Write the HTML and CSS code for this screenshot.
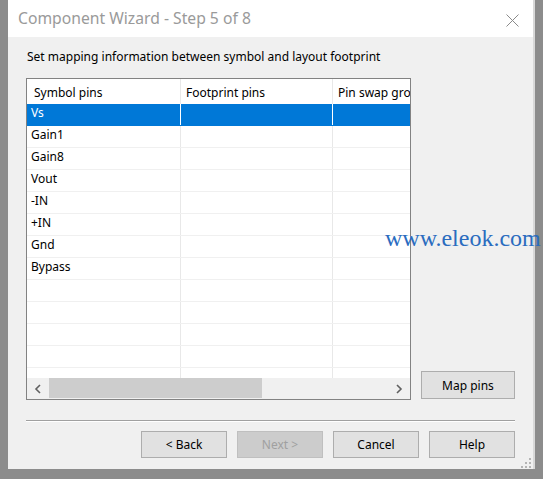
FILE: index.html
```html
<!DOCTYPE html>
<html>
<head>
<meta charset="utf-8">
<link rel="stylesheet" href="styles.css">
</head>
<body>
<div class="dialog">
  <div class="titlebar">
    <span class="title">Component Wizard - Step 5 of 8</span>
    <svg class="close" width="13" height="13" viewBox="0 0 13 13"><path d="M0.5 0.5L12.5 12.5M12.5 0.5L0.5 12.5" stroke="#8a8a8a" stroke-width="1" fill="none"/></svg>
  </div>
  <div class="content">
    <p class="label">Set mapping information between symbol and layout footprint</p>
    <div class="main">
      <div class="grid">
        <div class="grid-head">
          <div class="hc c1">Symbol pins</div>
          <div class="hc c2">Footprint pins</div>
          <div class="hc c3">Pin swap group</div>
        </div>
        <div class="grid-body">
          <div class="row sel"><div class="cell c1">Vs</div><div class="cell c2"></div><div class="cell c3"></div></div>
          <div class="row"><div class="cell c1">Gain1</div><div class="cell c2"></div><div class="cell c3"></div></div>
          <div class="row"><div class="cell c1">Gain8</div><div class="cell c2"></div><div class="cell c3"></div></div>
          <div class="row"><div class="cell c1">Vout</div><div class="cell c2"></div><div class="cell c3"></div></div>
          <div class="row"><div class="cell c1">-IN</div><div class="cell c2"></div><div class="cell c3"></div></div>
          <div class="row"><div class="cell c1">+IN</div><div class="cell c2"></div><div class="cell c3"></div></div>
          <div class="row"><div class="cell c1">Gnd</div><div class="cell c2"></div><div class="cell c3"></div></div>
          <div class="row"><div class="cell c1">Bypass</div><div class="cell c2"></div><div class="cell c3"></div></div>
          <div class="row"><div class="cell c1"></div><div class="cell c2"></div><div class="cell c3"></div></div>
          <div class="row"><div class="cell c1"></div><div class="cell c2"></div><div class="cell c3"></div></div>
          <div class="row"><div class="cell c1"></div><div class="cell c2"></div><div class="cell c3"></div></div>
          <div class="row"><div class="cell c1"></div><div class="cell c2"></div><div class="cell c3"></div></div>
          <div class="row"><div class="cell c1"></div><div class="cell c2"></div><div class="cell c3"></div></div>
        </div>
        <div class="hscroll">
          <div class="arrow"><svg width="8" height="10" viewBox="0 0 8 10"><path d="M6 1L2 5L6 9" stroke="#606060" stroke-width="1.6" fill="none"/></svg></div>
          <div class="track"><div class="thumb"></div></div>
          <div class="arrow"><svg width="8" height="10" viewBox="0 0 8 10"><path d="M2 1L6 5L2 9" stroke="#606060" stroke-width="1.6" fill="none"/></svg></div>
        </div>
      </div>
      <div class="side">
        <button class="btn map">Map pins</button>
      </div>
    </div>
    <div class="sep"></div>
    <div class="buttons">
      <button class="btn">&lt; Back</button>
      <button class="btn disabled">Next &gt;</button>
      <button class="btn">Cancel</button>
      <button class="btn">Help</button>
    </div>
  </div>
  <svg class="grip" width="12" height="12" viewBox="0 0 12 12">
    <rect x="9" y="1" width="2" height="2" fill="#b4b4b4"/>
    <rect x="5" y="5" width="2" height="2" fill="#b4b4b4"/>
    <rect x="9" y="5" width="2" height="2" fill="#b4b4b4"/>
    <rect x="1" y="9" width="2" height="2" fill="#b4b4b4"/>
    <rect x="5" y="9" width="2" height="2" fill="#b4b4b4"/>
    <rect x="9" y="9" width="2" height="2" fill="#b4b4b4"/>
  </svg>
</div>
<div class="watermark">www.eleok.com</div>
</body>
</html>
```
FILE: styles.css
```css
html, body {
  margin: 0;
  padding: 0;
}
body {
  background: #8c8c8c;
  width: 543px;
  height: 479px;
  overflow: hidden;
  position: relative;
  font-family: "Noto Sans", "Open Sans", sans-serif;
  font-size: 12px;
  color: #000;
}
.dialog {
  position: relative;
  margin-left: 8px;
  width: 525px;
  height: 469px;
  background: #f0f0f0;
  display: flex;
  flex-direction: column;
  box-shadow: 2px 0 0 #d8d8d8;
}
.titlebar {
  height: 37px;
  background: #fff;
  display: flex;
  align-items: center;
  justify-content: space-between;
  padding: 0 14px 0 10px;
  flex: none;
}
.title {
  font-size: 15.7px;
  color: #9a9a9a;
  line-height: 20px;
  margin-top: -1px;
}
.close {
  margin-top: 3px;
}
.content {
  padding: 0 18px;
  display: flex;
  flex-direction: column;
}
.label {
  margin: 12px 0 13px 1px;
  line-height: 16px;
  height: 16px;
  white-space: nowrap;
}
.main {
  display: flex;
  align-items: flex-end;
  gap: 10px;
}
.grid {
  width: 385px;
  height: 322px;
  box-sizing: border-box;
  border: 1px solid #828282;
  background: #fff;
  display: flex;
  flex-direction: column;
  overflow: hidden;
}
.grid-head {
  height: 25px;
  display: flex;
  flex: none;
}
.hc {
  line-height: 25px;
  padding-top: 1px;
  white-space: nowrap;
  overflow: hidden;
  box-sizing: border-box;
  flex: none;
}
.c1 { width: 154px; border-right: 1px solid #e8e8e8; box-sizing: border-box; flex: none; }
.c2 { width: 152px; border-right: 1px solid #e8e8e8; box-sizing: border-box; flex: none; }
.c3 { flex: 1 1 auto; min-width: 0; }
.hc.c1 { padding-left: 7px; }
.hc.c2 { padding-left: 5px; }
.hc.c3 { padding-left: 5px; }
.grid-body {
  height: 274px;
  overflow: hidden;
  flex: none;
}
.row {
  display: flex;
  height: 22px;
  box-sizing: border-box;
  border-bottom: 1px solid #f0f0f0;
}
.cell {
  line-height: 18px;
  white-space: nowrap;
  overflow: hidden;
}
.cell.c1 { padding-left: 4px; }
.row.sel {
  background: #0078d7;
  color: #fff;
  border-bottom-color: #0078d7;
}
.row.sel .cell { border-right-color: #fff; }
.hscroll {
  height: 21px;
  display: flex;
  background: #f0f0f0;
  flex: none;
}
.arrow {
  width: 22px;
  display: flex;
  align-items: center;
  justify-content: center;
  flex: none;
}
.track {
  flex: 1;
  display: flex;
}
.thumb {
  width: 213px;
  margin: 0 0 1px 0;
  background: #cdcdcd;
}
.side {
  display: flex;
  padding-bottom: 1px;
}
.btn {
  font-family: "Noto Sans", "Open Sans", sans-serif;
  font-size: 12px;
  color: #000;
  background: #e1e1e1;
  border: 1px solid #adadad;
  margin: 0;
  padding: 0;
  height: 27px;
  width: 86px;
  line-height: 25px;
}
.btn.map {
  width: 94px;
  height: 28px;
}
.btn.disabled {
  background: #cccccc;
  border-color: #bfbfbf;
  color: #a0a0a0;
}
.sep {
  height: 1px;
  background: #a0a0a0;
  margin-top: 20px;
  border-bottom: 1px solid #fff;
}
.buttons {
  display: flex;
  justify-content: flex-end;
  gap: 10px;
  margin-top: 9px;
}
.grip {
  position: absolute;
  right: 1px;
  bottom: 0;
}
.watermark {
  position: absolute;
  left: 385px;
  top: 224px;
  font-family: "Liberation Serif", serif;
  font-size: 24px;
  line-height: 28px;
  color: #2a6cbf;
  white-space: nowrap;
}
```
